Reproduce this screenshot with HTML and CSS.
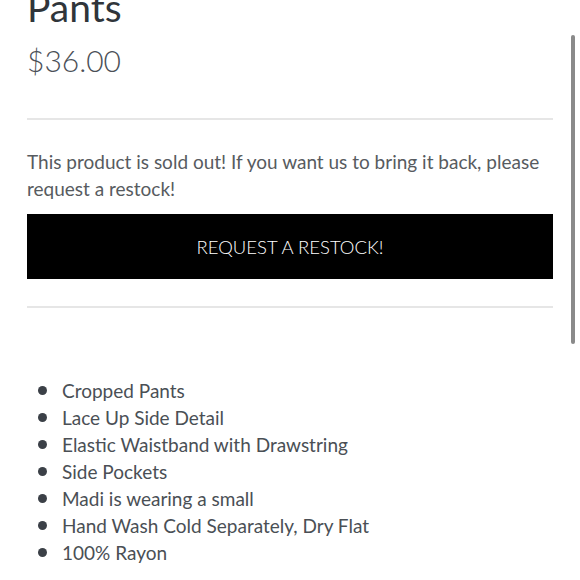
FILE: index.html
```html
<!DOCTYPE html>
<html lang="en">
<head>
<meta charset="utf-8">
<title>Pants</title>
<link rel="stylesheet" href="styles.css">
</head>
<body>
<main class="product">
  <h1 class="title">Pants</h1>
  <p class="price">$36.00</p>
  <hr class="rule">
  <p class="soldout">This product is sold out! If you want us to bring it back, please request a restock!</p>
  <button class="restock" type="button">REQUEST A RESTOCK!</button>
  <hr class="rule">
  <ul class="features">
    <li>Cropped Pants</li>
    <li>Lace Up Side Detail</li>
    <li>Elastic Waistband with Drawstring</li>
    <li>Side Pockets</li>
    <li>Madi is wearing a small</li>
    <li>Hand Wash Cold Separately, Dry Flat</li>
    <li>100% Rayon</li>
  </ul>
</main>
<div class="scroll-thumb"></div>
</body>
</html>
```

FILE: styles.css
```css
html, body {
  margin: 0;
  padding: 0;
  background: #ffffff;
  overflow: hidden;
}
body {
  font-family: "Lato", "Open Sans", sans-serif;
  position: relative;
  height: 580px;
}
.product {
  padding: 0 27px;
  display: flex;
  flex-direction: column;
}
.title {
  margin: -16px 0 0 0;
  font-size: 39px;
  font-weight: 400;
  line-height: 46px;
  color: #30353a;
}
.price {
  margin: 12px 0 0 0;
  font-size: 30px;
  font-weight: 300;
  line-height: 36px;
  color: #4b5057;
}
.rule {
  margin: 0;
  border: 0;
  height: 2px;
  background: #e6e6e6;
}
.price + .rule {
  margin-top: 40px;
}
.soldout {
  margin: 28px 0 0 0;
  font-size: 19px;
  font-weight: 400;
  line-height: 27px;
  color: #575b60;
}
.restock {
  margin: 12px 0 0 0;
  height: 65px;
  background: #000000;
  color: #ffffff;
  border: 0;
  font-family: inherit;
  font-size: 18.5px;
  font-weight: 300;
  padding: 0;
}
.restock + .rule {
  margin-top: 27px;
}
.features {
  margin: 69px 0 0 0;
  padding: 0 0 0 11px;
  list-style: none;
  font-size: 19px;
  line-height: 27px;
  color: #4a4f55;
}
.features li {
  display: flex;
  align-items: center;
  gap: 15px;
}
.features li::before {
  content: "";
  width: 9px;
  height: 9px;
  border-radius: 50%;
  background: #3b4047;
  flex: none;
}
.scroll-thumb {
  position: absolute;
  left: 571px;
  top: 35px;
  width: 4px;
  height: 309px;
  border-radius: 2px;
  background: #8a8a8a;
}
```
